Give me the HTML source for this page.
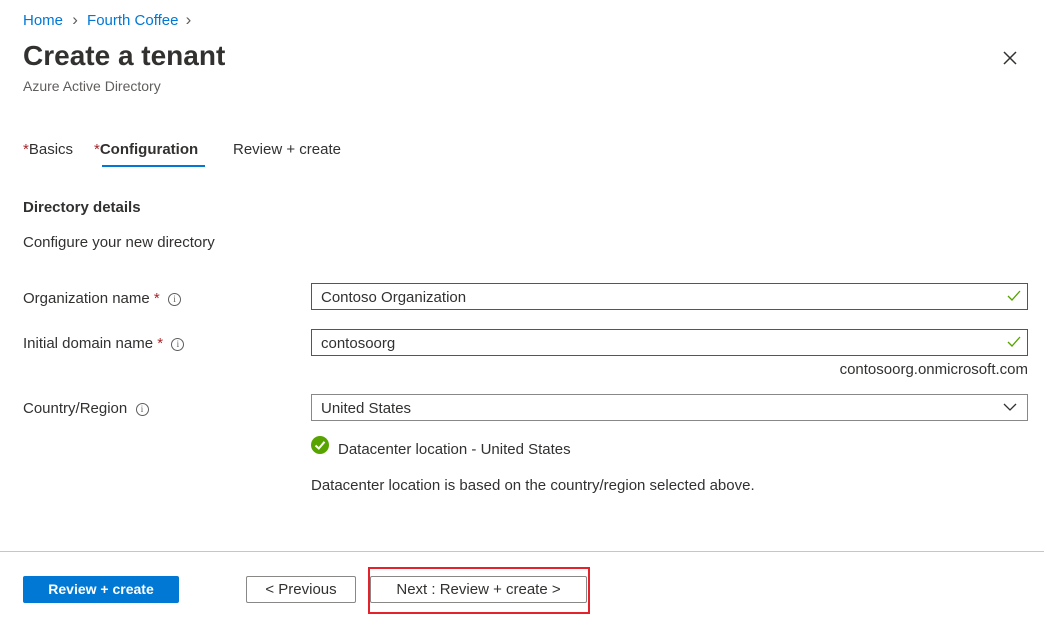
<!DOCTYPE html>
<html><head><meta charset="utf-8"><style>
*{box-sizing:border-box;margin:0;padding:0}
body{width:1044px;height:634px;background:#fff;font-family:"Liberation Sans",sans-serif;color:#323130;position:relative;overflow:hidden;font-size:15px}
.a{position:absolute;white-space:nowrap}
.bc{color:#0078d4;font-size:15px}
.inp{position:absolute;left:311px;width:717px;height:27px;border:1px solid #8a2da5;font-size:15px;padding:5px 9px;line-height:17px}
.ck{position:absolute;right:6px;top:6px}
.req{color:#a4262c}
.info{display:inline-block;width:13px;height:13px;border:1px solid #605e5c;border-radius:50%;font-size:9px;text-align:center;line-height:11px;color:#605e5c;vertical-align:1px;font-family:"Liberation Serif",serif}
.btn{position:absolute;top:576px;height:27px;font-size:15px;text-align:center;line-height:25px;border:1px solid #8a8886;border-radius:2px;background:#fff}
</style></head><body>
<div class="a bc" style="left:23px;top:10px">Home <span style="color:#605e5c;margin:0 5px;font-size:17px">&#8250;</span> Fourth Coffee <span style="color:#605e5c;margin-left:3px;font-size:17px">&#8250;</span></div>
<div class="a" style="left:23px;top:40px;font-size:28px;font-weight:bold;color:#323130">Create a tenant</div>
<div class="a" style="left:23px;top:78px;font-size:14px;color:#605e5c">Azure Active Directory</div>
<svg class="a" style="left:1003px;top:51px" width="14" height="14"><path d="M1 1L13 13M13 1L1 13" stroke="#323130" stroke-width="1.5"/></svg>
<div class="a" style="left:23px;top:141px"><span class="req">*</span>Basics</div>
<div class="a" style="left:94px;top:141px;font-weight:bold"><span class="req" style="font-weight:normal">*</span>Configuration</div>
<div class="a" style="left:102px;top:165px;width:103px;height:2px;background:#0078d4"></div>
<div class="a" style="left:233px;top:141px">Review + create</div>
<div class="a" style="left:23px;top:199px;font-weight:bold">Directory details</div>
<div class="a" style="left:23px;top:234px">Configure your new directory</div>
<div class="a" style="left:23px;top:290px">Organization name <span class="req">*</span> &nbsp;<span class="info">i</span></div>
<div class="a" style="left:23px;top:335px">Initial domain name <span class="req">*</span> &nbsp;<span class="info">i</span></div>
<div class="a" style="left:23px;top:400px">Country/Region &nbsp;<span class="info">i</span></div>
<div class="inp" style="top:283px">Contoso Organization<svg class="ck" width="14" height="12"><path d="M1 6L5 10L13 1" fill="none" stroke="#57a300" stroke-width="1.3"/></svg></div>
<div class="inp" style="top:329px">contosoorg<svg class="ck" width="14" height="12"><path d="M1 6L5 10L13 1" fill="none" stroke="#57a300" stroke-width="1.3"/></svg></div>
<div class="a" style="right:16px;top:361px">contosoorg.onmicrosoft.com</div>
<div class="inp" style="top:394px;border-color:#8a8886">United States<svg class="ck" style="top:8px;right:10px" width="14" height="9"><path d="M1 1L7 7L13 1" fill="none" stroke="#323130" stroke-width="1.3"/></svg></div>
<svg class="a" style="left:311px;top:436px" width="18" height="18"><circle cx="9" cy="9" r="9" fill="#57a300"/><path d="M4.5 9.5L7.8 12.5L13.5 5.8" fill="none" stroke="#fff" stroke-width="2"/></svg>
<div class="a" style="left:338px;top:441px">Datacenter location - United States</div>
<div class="a" style="left:311px;top:477px">Datacenter location is based on the country/region selected above.</div>
<div class="a" style="left:0;top:551px;width:1044px;height:1px;background:#c8c6c4"></div>
<div class="btn" style="left:23px;width:156px;background:#0078d4;border-color:#0078d4;color:#fff;font-weight:bold;font-size:14px">Review + create</div>
<div class="btn" style="left:246px;width:110px">&lt; Previous</div>
<div class="btn" style="left:370px;width:217px">Next : Review + create &gt;</div>
<div class="a" style="left:368px;top:567px;width:222px;height:47px;border:2px solid #e3222c"></div>
</body></html>
